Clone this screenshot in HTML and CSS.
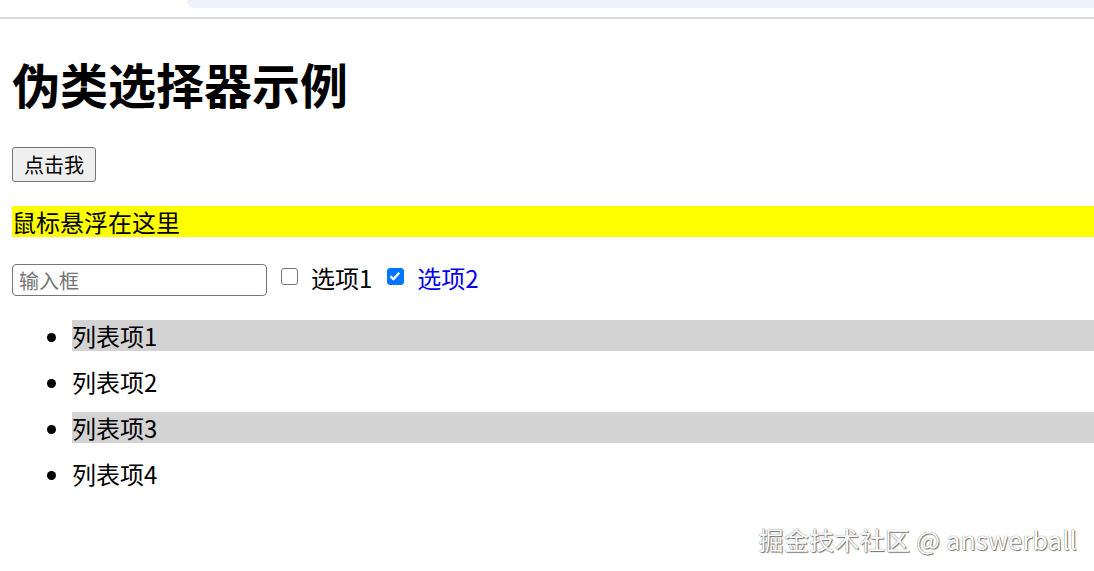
FILE: index.html
```html
<!DOCTYPE html>
<html lang="zh-CN">
<head>
    <meta charset="UTF-8">
    <meta name="viewport" content="width=device-width, initial-scale=1.0">
    <title>伪类选择器示例</title>
    <link rel="stylesheet" href="styles.css">
</head>
<body>

    <div class="browser-bar">
        <div class="omnibox"></div>
    </div>

    <div class="page">
        <h1>伪类选择器示例</h1>

        <button type="button" class="btn">点击我</button>

        <p class="hover-box">鼠标悬浮在这里</p>

        <div class="form-row">
            <input type="text" class="text-input" placeholder="输入框">
            <input type="checkbox" id="opt1" class="check">
            <label for="opt1" class="opt">选项1</label>
            <input type="checkbox" id="opt2" class="check" checked>
            <label for="opt2" class="opt opt-checked">选项2</label>
        </div>

        <ul class="list">
            <li>列表项1</li>
            <li>列表项2</li>
            <li>列表项3</li>
            <li>列表项4</li>
        </ul>
    </div>

    <div class="watermark">掘金技术社区 @ answerball</div>

</body>
</html>
```

FILE: styles.css
```css
html, body {
    height: 100%;
}
body {
    margin: 0;
    font-family: "Noto Sans CJK SC", "Noto Sans", sans-serif;
    font-size: 24px;
    line-height: 31px;
    color: #000;
    background-color: #fff;
    position: relative;
    overflow: hidden;
}
.browser-bar {
    height: 17px;
    border-bottom: 2px solid #dadada;
}
.omnibox {
    margin-left: 187px;
    height: 8px;
    background-color: #edf1f9;
    border-bottom-left-radius: 12px;
}
.page {
    padding-left: 12px;
}
h1 {
    font-size: 48px;
    line-height: 63px;
    font-weight: bold;
    margin: 33px 0 32px;
}
.btn {
    font-family: inherit;
    font-size: 20px;
    line-height: 29px;
    padding: 2px 11px;
    color: #000;
    background-color: #efefef;
    border: 1px solid #767676;
    border-radius: 3px;
    display: block;
}
.hover-box {
    margin: 24px 0;
    background-color: yellow;
}
.form-row {
    display: flex;
    align-items: center;
    height: 32px;
    padding-top: 3px;
}
.text-input {
    box-sizing: border-box;
    width: 255px;
    height: 32px;
    margin: 0;
    padding: 0 6px;
    font-family: inherit;
    font-size: 20px;
    border: 1px solid #767676;
    border-radius: 4px;
}
.text-input::placeholder {
    color: #757575;
}
.check {
    appearance: none;
    -webkit-appearance: none;
    box-sizing: border-box;
    width: 17px;
    height: 17px;
    margin: 0 0 7px 14px;
    background-color: #fff;
    border: 1.5px solid #767676;
    border-radius: 3px;
}
.check:checked {
    border-color: #0075ff;
    background-color: #0075ff;
    background-image: url("data:image/svg+xml;utf8,<svg xmlns='http://www.w3.org/2000/svg' viewBox='0 0 17 17'><path d='M4 8.8 L7 11.6 L12.8 5.2' fill='none' stroke='white' stroke-width='2.4'/></svg>");
    background-position: -1.5px -1.5px;
    background-size: 17px 17px;
}
.opt {
    margin: 0 0 6px 13px;
}
.check + .opt + .check {
    margin-left: 15px;
}
.opt-checked {
    color: #0000ee;
}
.list {
    margin: 24px 0;
    padding-left: 60px;
}
.list li {
    margin: 15px 0;
}
.list li:nth-child(odd) {
    background-color: lightgray;
}
.watermark {
    position: absolute;
    top: 522px;
    right: 17px;
    font-size: 25px;
    letter-spacing: 0.3px;
    line-height: 34px;
    color: #fff;
    text-shadow: 0 0 1px #555, 1px 1px 1px #777;
}
```
